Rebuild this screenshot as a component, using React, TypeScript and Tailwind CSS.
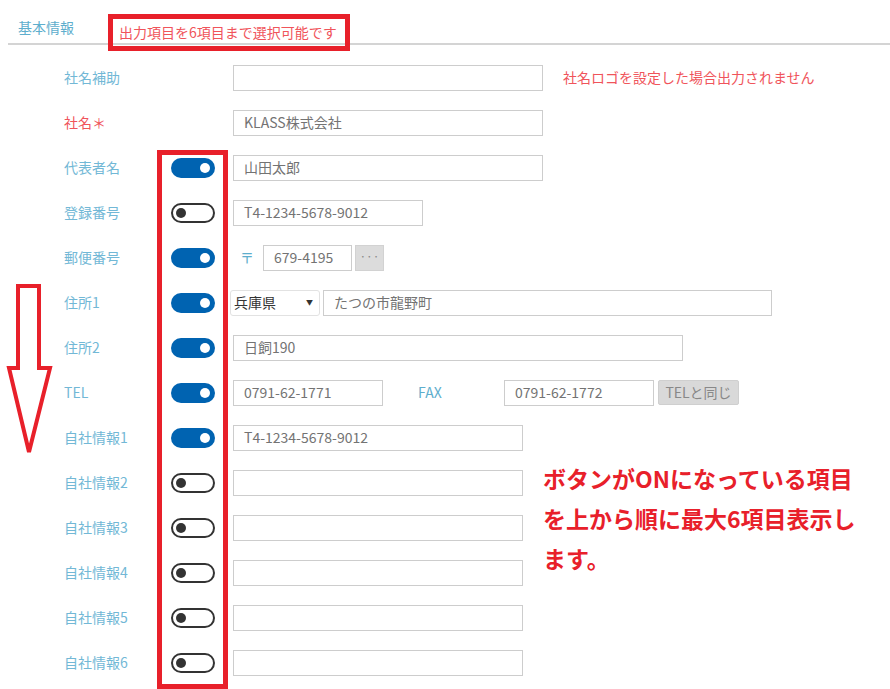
import React from "react";

const FONT = { fontFamily: '"Noto Sans CJK JP", "Noto Sans", sans-serif' };

function Toggle({ on }: { on: boolean }) {
  if (on) {
    return (
      <div className="w-[44px] h-[20px] rounded-full bg-[#0063b1] flex items-center justify-end pr-[5px]">
        <div className="w-[10px] h-[10px] rounded-full bg-white" />
      </div>
    );
  }
  return (
    <div className="w-[44px] h-[20px] rounded-full border-2 border-[#333] bg-white flex items-center pl-[3px]">
      <div className="w-[10px] h-[10px] rounded-full bg-[#333]" />
    </div>
  );
}

function Field({ w, value }: { w: string; value?: string }) {
  return (
    <div
      className={`${w} h-[26px] border border-[#cdcdcd] bg-white flex items-center pl-[10px] text-[14px] text-[#737373] shrink-0`}
    >
      {value}
    </div>
  );
}

function Row({
  label,
  toggle,
  red,
  children,
}: {
  label: React.ReactNode;
  toggle?: boolean | null;
  red?: boolean;
  children: React.ReactNode;
}) {
  return (
    <div className="h-[45px] flex items-center">
      <div
        className={`w-[171px] pl-[64px] text-[14px] ${red ? "text-[#f0545b]" : "text-[#72b8d6]"}`}
      >
        {label}
      </div>
      <div className="w-[62px] flex items-center">
        {toggle === undefined || toggle === null ? null : <Toggle on={toggle} />}
      </div>
      <div className="flex items-center">{children}</div>
    </div>
  );
}

export default function App() {
  return (
    <div className="relative w-[890px] h-[689px] bg-white overflow-hidden" style={FONT}>
      {/* tab header */}
      <div className="ml-[8px] h-[45px] border-b-2 border-[#d4d4d4] flex items-end pb-[5px]">
        <span className="ml-[10px] text-[14px] text-[#5eaecd]">基本情報</span>
      </div>

      <div className="pt-[10px]">
        <Row label="社名補助">
          <Field w="w-[310px]" />
          <span className="ml-[20px] text-[14px] text-[#f0545b]">
            社名ロゴを設定した場合出力されません
          </span>
        </Row>
        <Row label="社名＊" red>
          <Field w="w-[310px]" value="KLASS株式会社" />
        </Row>
        <Row label="代表者名" toggle={true}>
          <Field w="w-[310px]" value="山田太郎" />
        </Row>
        <Row label="登録番号" toggle={false}>
          <Field w="w-[190px]" value="T4-1234-5678-9012" />
        </Row>
        <Row label="郵便番号" toggle={true}>
          <span className="ml-[7px] w-[23px] text-[14px] text-[#5eaecd]">〒</span>
          <Field w="w-[89px]" value="679-4195" />
          <div className="ml-[3px] w-[29px] h-[26px] bg-[#dcdcdc] border border-[#d2d2d2] flex items-center justify-center text-[12px] text-[#888] leading-none pb-[4px]">
            ···
          </div>
        </Row>
        <Row label="住所1" toggle={true}>
          <div className="-ml-[3px] w-[90px] h-[26px] border border-[#e2e2e2] rounded-[3px] bg-white flex items-center justify-between pl-[3px] pr-[6px] text-[14px] text-[#333]">
            <span>兵庫県</span>
            <span className="text-[7px] text-[#333]">▼</span>
          </div>
          <div className="ml-[3px]">
            <Field w="w-[449px]" value="たつの市龍野町" />
          </div>
        </Row>
        <Row label="住所2" toggle={true}>
          <Field w="w-[450px]" value="日飼190" />
        </Row>
        <Row label="TEL" toggle={true}>
          <Field w="w-[150px]" value="0791-62-1771" />
          <span className="ml-[35px] w-[86px] text-[14px] text-[#5eaecd]">FAX</span>
          <Field w="w-[150px]" value="0791-62-1772" />
          <div className="ml-[4px] w-[81px] h-[25px] bg-[#d9d9d9] border border-[#cfcfcf] rounded-[2px] flex items-center justify-center text-[14px] text-[#888]">
            TELと同じ
          </div>
        </Row>
        <Row label="自社情報1" toggle={true}>
          <Field w="w-[290px]" value="T4-1234-5678-9012" />
        </Row>
        <Row label="自社情報2" toggle={false}>
          <Field w="w-[290px]" />
        </Row>
        <Row label="自社情報3" toggle={false}>
          <Field w="w-[290px]" />
        </Row>
        <Row label="自社情報4" toggle={false}>
          <Field w="w-[290px]" />
        </Row>
        <Row label="自社情報5" toggle={false}>
          <Field w="w-[290px]" />
        </Row>
        <Row label="自社情報6" toggle={false}>
          <Field w="w-[290px]" />
        </Row>
      </div>

      {/* annotation: tab red box */}
      <div className="absolute left-[108px] top-[14px] w-[242px] h-[37px] border-[5px] border-[#e8202a] flex items-center pl-[6px]">
        <span className="text-[14px] text-[#f0545b]">出力項目を6項目まで選択可能です</span>
      </div>

      {/* annotation: toggles red box */}
      <div className="absolute left-[157px] top-[150px] w-[71px] h-[539px] border-[5px] border-[#e8202a]" />

      {/* annotation: arrow */}
      <svg className="absolute left-0 top-[280px]" width="60" height="180" viewBox="0 0 60 180">
        <polygon
          points="18,6 39,6 39,88 50,88 29,172 9,88 18,88"
          fill="none"
          stroke="#e8202a"
          strokeWidth="4"
          strokeLinejoin="miter"
        />
      </svg>

      {/* annotation: big text */}
      <div className="absolute left-[543px] top-[458px] text-[23px] font-bold leading-[40px] text-[#e8202a]">
        ボタンがONになっている項目
        <br />
        を上から順に最大6項目表示し
        <br />
        ます。
      </div>
    </div>
  );
}
